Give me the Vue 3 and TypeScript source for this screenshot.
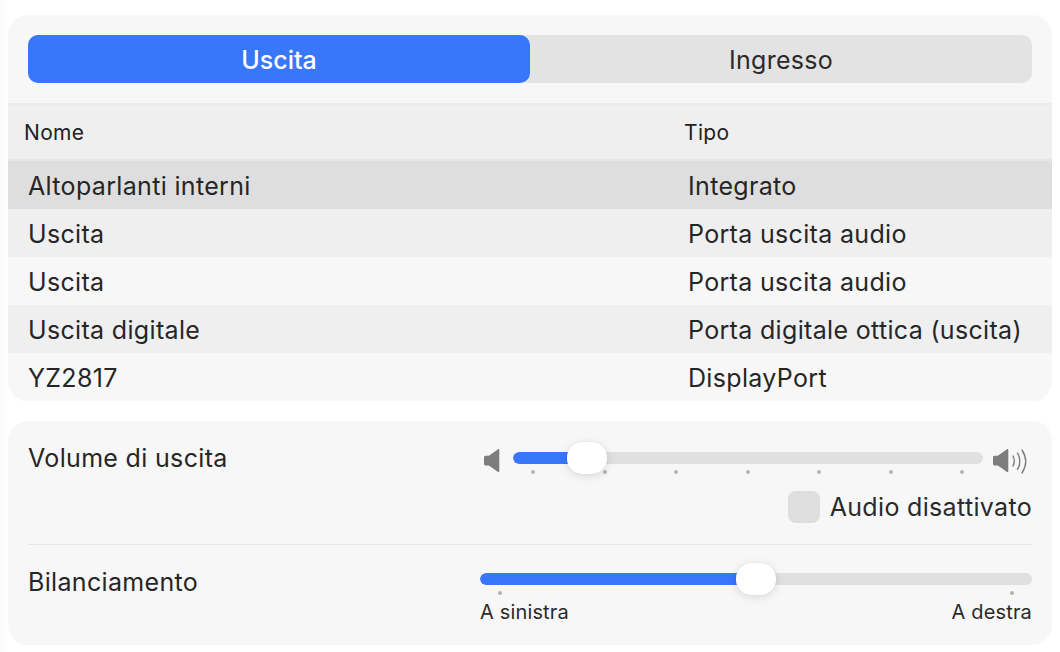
<script setup lang="ts">
const rows = [
  { name: 'Altoparlanti interni', type: 'Integrato' },
  { name: 'Uscita', type: 'Porta uscita audio' },
  { name: 'Uscita', type: 'Porta uscita audio' },
  { name: 'Uscita digitale', type: 'Porta digitale ottica (uscita)' },
  { name: 'YZ2817', type: 'DisplayPort' },
]
const volumeTicks = [18, 90, 161, 233, 304, 376, 447]
</script>

<template>
  <div class="page">
    <section class="card">
      <div class="tabs">
        <div class="seg">
          <div class="tab active">Uscita</div>
          <div class="tab">Ingresso</div>
        </div>
      </div>
      <div class="thead">
        <span class="hname">Nome</span>
        <span class="htype">Tipo</span>
      </div>
      <div
        v-for="(row, i) in rows"
        :key="i"
        class="row"
        :class="{ selected: i === 0, odd: i % 2 === 1 }"
      >
        <span class="cname">{{ row.name }}</span>
        <span class="ctype">{{ row.type }}</span>
      </div>
    </section>

    <section class="card controls">
      <div class="block vol">
        <div class="label">Volume di uscita</div>
        <div class="right">
          <div class="vol-line">
            <svg class="spk" width="16" height="23" viewBox="0 0 16 23">
              <path d="M0 8.500c0-1 .6-1.700 1.500-1.700h3.300L13.700 .4c.8-.6 1.600-.2 1.600.8v20.800c0 1-.8 1.400-1.600.8L4.800 16.400H1.500C.6 16.400 0 15.700 0 14.700z" fill="#7d7d7d" />
            </svg>
            <div class="slider short">
              <div class="track">
                <div class="fill" :style="{ width: '74px' }"></div>
              </div>
              <div class="thumb" :style="{ left: '54px' }"></div>
              <i v-for="t in volumeTicks" :key="t" class="tick" :style="{ left: t + 'px' }"></i>
            </div>
            <svg class="spk-loud" width="36" height="25" viewBox="0 0 36 25">
              <path d="M0 8.500c0-1 .6-1.700 1.500-1.700h3.300L13.700 .4c.8-.6 1.600-.2 1.600.8v20.800c0 1-.8 1.400-1.600.8L4.800 16.400H1.500C.6 16.400 0 15.700 0 14.700z" fill="#7d7d7d" />
              <path d="M20 7q2.600 5 0 10" fill="none" stroke="#7d7d7d" stroke-width="1.400" stroke-linecap="round" />
              <path d="M24.500 4q4.800 8.500 0 16.500" fill="none" stroke="#7d7d7d" stroke-width="1.400" stroke-linecap="round" />
              <path d="M29 1q7.500 11.500 0 23" fill="none" stroke="#7d7d7d" stroke-width="1.400" stroke-linecap="round" />
            </svg>
          </div>
          <div class="mute">
            <span class="check"></span>
            <span>Audio disattivato</span>
          </div>
        </div>
      </div>
      <div class="divider"></div>
      <div class="block bal">
        <div class="label">Bilanciamento</div>
        <div class="right">
          <div class="slider long">
            <div class="track">
              <div class="fill" :style="{ width: '276px' }"></div>
            </div>
            <div class="thumb" :style="{ left: '256px' }"></div>
            <i class="tick" :style="{ left: '18px' }"></i>
            <i class="tick" :style="{ left: '530px' }"></i>
          </div>
          <div class="ends">
            <span>A sinistra</span>
            <span>A destra</span>
          </div>
        </div>
      </div>
    </section>
  </div>
</template>

<style>
html, body { margin: 0; background: #fff; }
</style>

<style scoped>
.page {
  width: 1060px;
  height: 652px;
  box-sizing: border-box;
  padding: 15px 8px 7px;
  display: flex;
  flex-direction: column;
  gap: 20px;
  overflow: hidden;
  font-family: Inter, "Liberation Sans", sans-serif;
  color: #222;
  background: linear-gradient(90deg, #fafbfc 0, #fff 8px);
}
.card {
  background: #f7f7f7;
  border-radius: 20px;
  overflow: hidden;
}
.tabs { padding: 20px 20px; }
.seg {
  display: flex;
  height: 48px;
  border-radius: 10px;
  background: #e3e3e3;
}
.tab {
  flex: 1;
  display: flex;
  align-items: center;
  justify-content: center;
  padding-top: 1px;
  box-sizing: border-box;
  font-size: 25px;
  letter-spacing: 0.25px;
  color: #2b2b2b;
  border-radius: 10px;
}
.tab.active {
  background: #3876fc;
  color: #fff;
  font-weight: 500;
  letter-spacing: 0;
}
.thead {
  height: 58px;
  box-sizing: border-box;
  background: #efefef;
  border-top: 2px solid #ebebeb;
  border-bottom: 2px solid #e6e6e6;
  display: flex;
  align-items: center;
  font-size: 21px;
  letter-spacing: 0.35px;
  color: #222;
}
.hname { width: 660px; padding-left: 16px; box-sizing: border-box; }
.htype { flex: 1; padding-left: 16px; box-sizing: border-box; }
.row {
  height: 48px;
  box-sizing: border-box;
  padding-top: 2px;
  display: flex;
  align-items: center;
  font-size: 25px;
  letter-spacing: 0.33px;
  color: #262626;
  background: #f7f7f7;
}
.row.odd { background: #efefef; }
.row.selected { background: #dedede; }
.cname { width: 660px; padding-left: 20px; box-sizing: border-box; }
.ctype { flex: 1; padding-left: 20px; box-sizing: border-box; white-space: nowrap; }
.controls { flex: 1; padding: 0 20px; }
.block { display: flex; }
.vol { height: 123px; }
.bal { height: 100px; }
.label {
  width: 452px;
  font-size: 25px;
  letter-spacing: 0.33px;
  color: #262626;
  line-height: 30px;
}
.vol .label { padding-top: 22px; }
.bal .label { padding-top: 22px; }
.right { width: 552px; }
.vol-line {
  display: flex;
  align-items: flex-start;
  padding-top: 28px;
  height: 32px;
}
.spk { margin: 0 13px 0 4px; flex: none; }
.spk-loud { margin: 0 0 0 10px; flex: none; }
.slider { position: relative; }
.slider.short { width: 470px; margin-top: 3px; }
.slider.long { width: 552px; margin-top: 28px; height: 34px; }
.track {
  height: 12px;
  border-radius: 6px;
  background: #e0e0e0;
  overflow: hidden;
}
.fill { height: 100%; background: #3876fc; border-radius: 6px 0 0 6px; }
.thumb {
  position: absolute;
  top: -10px;
  width: 40px;
  height: 32px;
  border-radius: 15px;
  background: #fff;
  box-shadow: 0 2px 10px rgba(0, 0, 0, 0.12), 0 0 1px rgba(0, 0, 0, 0.15);
  z-index: 1;
}
.tick {
  position: absolute;
  top: 18px;
  width: 4px;
  height: 4px;
  border-radius: 50%;
  background: #b4b4b4;
}
.mute {
  display: flex;
  align-items: center;
  justify-content: flex-end;
  gap: 10px;
  margin-top: 10px;
  font-size: 25px;
  letter-spacing: 0.33px;
  color: #2a2a2a;
  height: 32px;
}
.check {
  width: 32px;
  height: 32px;
  border-radius: 8px;
  background: #dedede;
}
.divider { height: 1px; background: #e5e5e5; margin-top: 0; }
.ends {
  display: flex;
  justify-content: space-between;
  font-size: 20px;
  letter-spacing: 0.15px;
  color: #2a2a2a;
  margin-top: -7px;
}
</style>
